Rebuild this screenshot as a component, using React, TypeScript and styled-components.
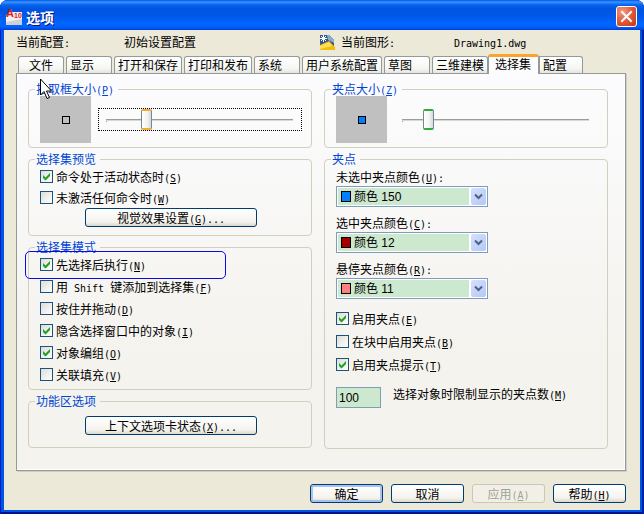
import React from "react";
import styled, { createGlobalStyle, css } from "styled-components";

const GlobalStyle = createGlobalStyle`
  *, *::before, *::after { box-sizing: border-box; }
  body {
    margin: 0;
    background: #fff;
    color: #000;
    font: 12px/14px "Noto Sans CJK SC", sans-serif;
  }
  button, input, select { font: inherit; color: inherit; margin: 0; }
`;

const Dialog = styled.div`
  position: relative;
  display: flex;
  flex-direction: column;
  min-height: 100vh;
  border-radius: 8px 8px 0 0;
  overflow: hidden;
  background: #0054e3;
  box-shadow: inset 1px 0 #0019cf, inset -2px 0 #001ea0, inset 0 -2px #00138c;
`;

const TitleBar = styled.header`
  display: flex;
  align-items: center;
  gap: 4px;
  height: 30px;
  padding: 3px 7px 0 6px;
  background: linear-gradient(
    #0058e6 0,
    #3a93ff 2px,
    #0463ee 5px,
    #0054e0 9px,
    #0058ea 16px,
    #0066ff 24px,
    #0061fa 27px,
    #003dd7 30px
  );
`;

const AppIcon = styled.svg`
  overflow: visible;
  font-family: "Liberation Sans", sans-serif;
  font-weight: 700;
`;

const Title = styled.h1`
  flex: 1;
  margin: 0;
  color: #fff;
  font-size: 14px;
  line-height: 20px;
  font-weight: 700;
  text-shadow: 1px 1px #0f1089;
`;

const CloseButton = styled.button`
  display: grid;
  place-items: center;
  width: 21px;
  height: 21px;
  padding: 0;
  border: 1px solid #fff;
  border-radius: 3px;
  background: radial-gradient(circle at 30% 25%, #f09a80, #e2583a 50%, #c8330e);
`;

const Client = styled.main`
  flex: 1;
  display: flex;
  flex-direction: column;
  margin: 0 4px 4px;
  padding: 0 14px 7px 12px;
  background: #ece9d8;
`;

const InfoBar = styled.div`
  display: grid;
  grid-template-columns: 108fr 195fr 22px 113fr 172fr;
  align-items: center;
  height: 24px;
`;

const TabStrip = styled.div`
  display: flex;
  align-items: flex-end;
  gap: 2px;
  height: 19px;
  padding-left: 2px;
`;

const Tab = styled.button<{ $active?: boolean; $centered?: boolean; $last?: boolean }>`
  flex: none;
  height: 17px;
  min-width: 46px;
  padding: 0 3px;
  border: 1px solid #919b9c;
  border-bottom: 0;
  border-radius: 3px 3px 0 0;
  background: linear-gradient(#fff, #f6f6f3 70%, #e6e5de);
  line-height: 14px;
  text-align: ${(p) => (p.$centered ? "center" : "left")};
  white-space: nowrap;
  ${(p) =>
    p.$active &&
    css`
      z-index: 1;
      height: 20px;
      min-width: 51px;
      margin: 0 -2px -1px;
      padding: 0 6px 3px;
      border-top: 3px solid #f7a530;
      background: #fcfcfe;
    `}
  ${(p) =>
    p.$last &&
    css`
      min-width: 44px;
      border-radius: 0 3px 0 0;
    `}
`;

const Panel = styled.section`
  flex: 1;
  display: flex;
  gap: 12px;
  padding: 8px 17px 21px 11px;
  border: 1px solid #919b9c;
  background: linear-gradient(#fcfcfe, #f4f3ee 70%);
  box-shadow: 1px 1px #d0cebf, inset -1px -1px #fff;
`;

const Column = styled.div`
  flex: 1;
  min-width: 0;
  display: flex;
  flex-direction: column;
  gap: 4px;
`;

const Group = styled.fieldset<{ $bottom: number; $grow?: boolean }>`
  min-width: 0;
  margin: 0;
  padding: 0 9px ${(p) => p.$bottom}px 11px;
  border: 1px solid #d0d0bf;
  border-radius: 4px;
  flex: ${(p) => (p.$grow ? "1" : "none")};
`;

const Legend = styled.legend`
  height: 14px;
  margin-left: -5px;
  padding: 0 4px 0 1px;
  color: #0046d5;
  line-height: 14px;
`;

const Latin = styled.span`
  font-family: "DejaVu Sans Mono", monospace;
  font-size: 10px;
  line-height: 0;
  white-space: pre;
`;

const SizeRow = styled.div`
  display: flex;
  align-items: center;
  gap: 7px;
`;

const Preview = styled.div`
  display: grid;
  place-items: center;
  width: 51px;
  height: 47px;
  background: #c0c0c0;
`;

const Marker = styled.span<{ $fill: string }>`
  width: 8px;
  height: 8px;
  border: 1px solid #000;
  background: ${(p) => p.$fill};
`;

const SliderFrame = styled.div<{ $focused?: boolean }>`
  flex: 1;
  min-width: 0;
  display: flex;
  height: 23px;
  padding: 0 8px 0 7px;
  border: 1px dotted ${(p) => (p.$focused ? "#000" : "transparent")};
`;

const Slider = styled.input<{ $accent: string }>`
  appearance: none;
  flex: 1;
  width: 100%;
  height: 21px;
  background: linear-gradient(#9d9c99, #9d9c99) 0 10px / 100% 1px no-repeat,
    linear-gradient(#d8d7d0, #d8d7d0) 0 11px / 100% 1px no-repeat,
    linear-gradient(#9d9c99, #9d9c99) 0 10px / 1px 3px no-repeat;
  outline: 0;
  &::-webkit-slider-thumb {
    appearance: none;
    width: 11px;
    height: 21px;
    border: 1px solid #778892;
    border-top: 2px solid ${(p) => p.$accent};
    border-bottom: 2px solid ${(p) => p.$accent};
    border-radius: 2px;
    background: linear-gradient(90deg, #fff, #f3f3ef 60%, #d5d9dc);
  }
`;

const CheckList = styled.div<{ $gap: number; $top?: number }>`
  display: flex;
  flex-direction: column;
  align-items: flex-start;
  gap: ${(p) => p.$gap}px;
  margin-top: ${(p) => p.$top ?? 0}px;
`;

const CheckLabel = styled.label`
  display: flex;
  align-items: center;
  gap: 3px;
  height: 21px;
  white-space: nowrap;
`;

const CheckCell = styled.span`
  display: grid;
  width: 13px;
  height: 13px;
  > * { grid-area: 1 / 1; }
  > svg { visibility: hidden; pointer-events: none; }
  > input:checked + svg { visibility: visible; }
`;

const CheckInput = styled.input`
  appearance: none;
  width: 13px;
  height: 13px;
  border: 1px solid #1c5180;
  background: linear-gradient(135deg, #dcdcd7, #fff);
`;

const PushButton = styled.button<{ $wide?: boolean; $primary?: boolean; $top?: number }>`
  display: block;
  width: ${(p) => (p.$wide ? 172 : 73)}px;
  height: 19px;
  margin: ${(p) => p.$top ?? 0}px ${(p) => (p.$wide ? "auto" : "0")} 0;
  padding: 0;
  border: 1px solid #003c74;
  border-radius: 3px;
  background: linear-gradient(#fff, #f4f3ee 75%, #dcd8cc);
  line-height: 14px;
  white-space: nowrap;
  box-shadow: ${(p) => (p.$primary ? "inset 0 0 0 2px #a9c2f0" : "none")};
  &:disabled {
    border-color: #c9c7ba;
    background: #f2f0e6;
    color: #a1a192;
  }
`;

const FieldStack = styled.div`
  display: flex;
  flex-direction: column;
  align-items: flex-start;
  gap: 9px;
  padding-top: 4px;
`;

const Field = styled.div`
  display: flex;
  flex-direction: column;
  gap: 2px;
`;

const FieldLabel = styled.label`
  height: 14px;
  white-space: nowrap;
`;

const Combo = styled.div`
  display: grid;
  grid-template-columns: 1fr 15px;
  gap: 2px;
  width: 152px;
  height: 21px;
  padding: 1px;
  border: 1px solid #7f9db9;
  background: #fff;
`;

const ComboField = styled.div`
  grid-area: 1 / 1;
  display: flex;
  align-items: center;
  padding-left: 3px;
  background: #cce8cf;
`;

const Swatch = styled.span<{ $fill: string }>`
  width: 10px;
  height: 11px;
  border: 1px solid #000;
  background: ${(p) => p.$fill};
`;

const ComboArrow = styled.div`
  grid-area: 1 / 2;
  display: grid;
  place-items: center;
  border-radius: 2px;
  background: linear-gradient(135deg, #d4e0fd, #b4c8f6);
`;

const ComboSelect = styled.select`
  grid-area: 1 / 1 / 2 / 3;
  appearance: none;
  height: 17px;
  padding: 0 0 0 16px;
  border: 0;
  background: transparent;
  font-family: "Liberation Sans", "Noto Sans CJK SC", sans-serif;
  line-height: 16px;
`;

const LimitRow = styled.div`
  display: flex;
  align-items: flex-start;
  gap: 12px;
  margin-top: 12px;
`;

const LimitInput = styled.input`
  width: 45px;
  height: 21px;
  padding: 0 2px;
  border: 1px solid #7f9db9;
  background: #cce8cf;
  font-family: "Liberation Sans", sans-serif;
`;

const Footer = styled.footer`
  display: flex;
  justify-content: flex-end;
  gap: 8px;
  padding-top: 13px;
`;

const Callout = styled.div`
  position: absolute;
  left: 25px;
  top: 251px;
  width: 201px;
  height: 28px;
  border: 1px solid #0a0ae6;
  border-radius: 5px;
  pointer-events: none;
`;

const Pointer = styled.svg`
  position: absolute;
  left: 40px;
  top: 78px;
  pointer-events: none;
`;

/** Chinese caption with half-width Latin runs and an underlined access key. */
function Caption({ text, hotkey, tail }: { text: string; hotkey?: string; tail?: string }) {
  return (
    <span>
      {text.split(/([\x20-\x7e]+)/).map((part, i) => (i % 2 ? <Latin key={i}>{part}</Latin> : part))}
      {hotkey && (
        <Latin>
          (<u>{hotkey}</u>){tail}
        </Latin>
      )}
    </span>
  );
}

function Check({ text, hotkey, checked }: { text: string; hotkey: string; checked?: boolean }) {
  return (
    <CheckLabel>
      <CheckCell>
        <CheckInput type="checkbox" defaultChecked={checked} />
        <svg width="13" height="13" viewBox="0 0 13 13" aria-hidden="true">
          <path d="M3 5v3l2.500 2.500L10 6V3L5.500 7.500Z" fill="#21a121" />
        </svg>
      </CheckCell>
      <Caption text={text} hotkey={hotkey} />
    </CheckLabel>
  );
}

function ColorField(p: { id: string; text: string; hotkey: string; color: string; value: string }) {
  return (
    <Field>
      <FieldLabel htmlFor={p.id}>
        <Caption text={p.text} hotkey={p.hotkey} tail=":" />
      </FieldLabel>
      <Combo>
        <ComboField>
          <Swatch $fill={p.color} />
        </ComboField>
        <ComboArrow>
          <svg width="9" height="7" viewBox="0 0 9 7" aria-hidden="true">
            <path d="M1 1.500 4.500 5 8 1.500" fill="none" stroke="#4d6185" strokeWidth="2" />
          </svg>
        </ComboArrow>
        <ComboSelect id={p.id}>
          <option>{p.value}</option>
        </ComboSelect>
      </Combo>
    </Field>
  );
}

const tabs = [
  "文件", "显示", "打开和保存", "打印和发布", "系统",
  "用户系统配置", "草图", "三维建模", "选择集", "配置",
];

export default function App() {
  return (
    <Dialog role="dialog" aria-label="选项">
      <GlobalStyle />
      <TitleBar>
        <AppIcon width="16" height="17" viewBox="0 0 16 17" aria-hidden="true">
          <path d="M0 8 3 4h13v13H0Z" fill="#f0f0f3" />
          <path d="M0 14 16 11v6H0Z" fill="#cfd0d6" />
          <text x="0" y="9" fontSize="11" fill="#e01818">A</text>
          <text x="8" y="10" fontSize="7" fill="#e01818">10</text>
        </AppIcon>
        <Title>选项</Title>
        <CloseButton type="button" aria-label="关闭">
          <svg width="13" height="13" viewBox="0 0 13 13" aria-hidden="true">
            <path d="m2 2 9 9m0-9-9 9" stroke="#fff" strokeWidth="2" strokeLinecap="square" />
          </svg>
        </CloseButton>
      </TitleBar>

      <Client>
        <InfoBar>
          <Caption text="当前配置:" />
          <span>初始设置配置</span>
          <svg width="16" height="17" viewBox="0 0 16 17" aria-hidden="true">
            <path d="M1 1h9l5 5v8H1Z" fill="#31588c" />
            <path d="M8 1h2l5 5v3L9 6Z" fill="#8eabc9" />
            <path d="M1 11 10 7l6 6v3H1Z" fill="#f0bd12" />
            <path d="M1 12 10 8l3 4-12 3Z" fill="#ffdf55" />
            <path d="M4.500 1v7M1 4.500h7M2 2l5 5m0-5L2 7" stroke="#fff" />
          </svg>
          <Caption text="当前图形:" />
          <Caption text="Drawing1.dwg" />
        </InfoBar>

        <TabStrip role="tablist">
          {tabs.map((name, i) => (
            <Tab
              key={name}
              type="button"
              role="tab"
              aria-selected={name === "选择集"}
              $active={name === "选择集"}
              $centered={i === 0}
              $last={i === tabs.length - 1}
            >
              {name}
            </Tab>
          ))}
        </TabStrip>

        <Panel role="tabpanel">
          <Column>
            <Group $bottom={4}>
              <Legend><Caption text="拾取框大小" hotkey="P" /></Legend>
              <SizeRow>
                <Preview><Marker $fill="transparent" /></Preview>
                <SliderFrame $focused>
                  <Slider type="range" aria-label="拾取框大小" defaultValue={20} $accent="#f5ab2e" />
                </SliderFrame>
              </SizeRow>
            </Group>

            <Group $bottom={8}>
              <Legend>选择集预览</Legend>
              <CheckList $gap={0}>
                <Check text="命令处于活动状态时" hotkey="S" checked />
                <Check text="未激活任何命令时" hotkey="W" />
              </CheckList>
              <PushButton type="button" $wide>
                <Caption text="视觉效果设置" hotkey="G" tail="..." />
              </PushButton>
            </Group>

            <Group $bottom={4}>
              <Legend>选择集模式</Legend>
              <CheckList $gap={1}>
                <Check text="先选择后执行" hotkey="N" checked />
                <Check text="用 Shift 键添加到选择集" hotkey="F" />
                <Check text="按住并拖动" hotkey="D" />
                <Check text="隐含选择窗口中的对象" hotkey="I" checked />
                <Check text="对象编组" hotkey="O" checked />
                <Check text="关联填充" hotkey="V" />
              </CheckList>
            </Group>

            <Group $bottom={12}>
              <Legend>功能区选项</Legend>
              <PushButton type="button" $wide $top={8}>
                <Caption text="上下文选项卡状态" hotkey="X" tail="..." />
              </PushButton>
            </Group>
          </Column>

          <Column>
            <Group $bottom={4}>
              <Legend><Caption text="夹点大小" hotkey="Z" /></Legend>
              <SizeRow>
                <Preview><Marker $fill="#007fff" /></Preview>
                <SliderFrame>
                  <Slider type="range" aria-label="夹点大小" defaultValue={12} $accent="#2fae35" />
                </SliderFrame>
              </SizeRow>
            </Group>

            <Group $bottom={8} $grow>
              <Legend>夹点</Legend>
              <FieldStack>
                <ColorField id="unselected" text="未选中夹点颜色" hotkey="U" color="#007fff" value="颜色 150" />
                <ColorField id="selected" text="选中夹点颜色" hotkey="C" color="#a50000" value="颜色 12" />
                <ColorField id="hover" text="悬停夹点颜色" hotkey="R" color="#ff7f7f" value="颜色 11" />
              </FieldStack>
              <CheckList $gap={2} $top={9}>
                <Check text="启用夹点" hotkey="E" checked />
                <Check text="在块中启用夹点" hotkey="B" />
                <Check text="启用夹点提示" hotkey="T" checked />
              </CheckList>
              <LimitRow>
                <LimitInput id="limit" type="text" defaultValue="100" />
                <FieldLabel htmlFor="limit">
                  <Caption text="选择对象时限制显示的夹点数" hotkey="M" />
                </FieldLabel>
              </LimitRow>
            </Group>
          </Column>
        </Panel>

        <Footer>
          <PushButton type="button" $primary>确定</PushButton>
          <PushButton type="button">取消</PushButton>
          <PushButton type="button" disabled><Caption text="应用" hotkey="A" /></PushButton>
          <PushButton type="button"><Caption text="帮助" hotkey="H" /></PushButton>
        </Footer>
      </Client>

      <Callout />
      <Pointer width="13" height="22" viewBox="0 0 13 22" aria-hidden="true">
        <path d="M.500 1v16l3.500-3.500 3 7 2.500-1-3-6.500h5Z" fill="#fff" stroke="#000" />
      </Pointer>
    </Dialog>
  );
}
